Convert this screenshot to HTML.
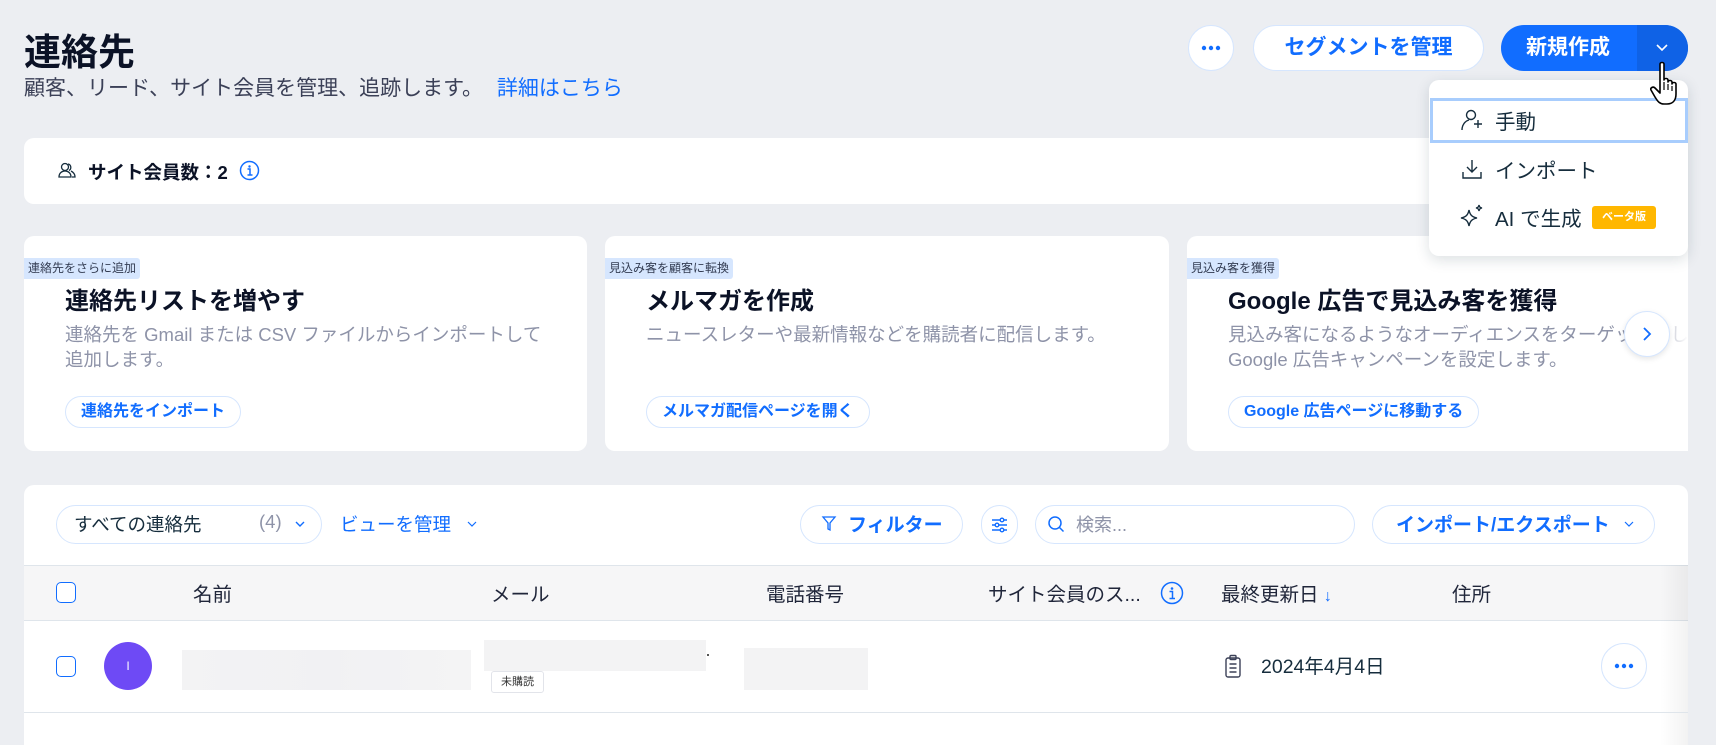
<!DOCTYPE html>
<html><head><meta charset="utf-8"><style>
*{box-sizing:border-box;margin:0;padding:0}
body{width:1716px;height:732px;overflow:hidden;background:#eceef2;font-family:"Liberation Sans","Noto Sans CJK JP",sans-serif;color:#162d3d;position:relative}
.abs{position:absolute}
.blue{color:#116dff}
.pill{position:absolute;border:1px solid #d6e6fe;border-radius:22px;background:#fff}
.card{position:absolute;top:236px;height:215px;background:#fff;border-radius:10px}
.tag{position:absolute;left:0;top:22px;height:21px;background:#d6e6fe;font-size:12px;line-height:21px;padding:0 4px;color:#333c52;border-radius:0 3px 3px 0}
.ct{position:absolute;left:41px;top:45px;font-size:24px;font-weight:bold;color:#0b1226}
.cd{position:absolute;left:41px;top:86px;font-size:18.5px;line-height:25px;color:#8e93a8;width:520px}
.cb{position:absolute;left:41px;top:160px;height:32px;border:1px solid #d6e6fe;border-radius:16px;padding:0 15px;font-size:16px;font-weight:bold;line-height:30px;color:#116dff}
.th{position:absolute;top:578px;font-size:19.5px;color:#20263a}
.cbx{position:absolute;width:20px;height:21px;border:1.5px solid #116dff;border-radius:5px;background:#fff}
.dots{position:absolute}
</style></head><body>
<div class="abs" style="left:24px;top:22px;font-size:37px;font-weight:bold;color:#0b1226">連絡先</div>
<div class="abs" style="left:24px;top:72px;font-size:21px;color:#3b4057">顧客、リード、サイト会員を管理、追跡します。 <span class="blue" style="margin-left:8px">詳細はこちら</span></div>

<!-- header buttons -->
<div class="pill" style="left:1188px;top:25px;width:46px;height:46px;border-radius:50%"></div>
<svg class="dots" style="left:1201px;top:45px" width="20" height="6" fill="#116dff"><circle cx="3" cy="3" r="2.2"/><circle cx="10" cy="3" r="2.2"/><circle cx="17" cy="3" r="2.2"/></svg>
<div class="pill" style="left:1253px;top:25px;width:231px;height:46px;border-radius:23px;text-align:center;line-height:44px;font-size:21px;font-weight:bold;color:#116dff">セグメントを管理</div>
<div class="abs" style="left:1501px;top:25px;width:187px;height:46px;border-radius:23px;background:#116dff;overflow:hidden">
<div class="abs" style="left:0;top:0;width:134px;height:46px;text-align:center;line-height:46px;color:#fff;font-size:21px;font-weight:bold">新規作成</div>
<div class="abs" style="left:136px;top:0;width:51px;height:46px;background:#0f62e6"></div>
<svg class="abs" style="left:154px;top:18px" width="14" height="10"><path d="M2 2l5 5 5-5" stroke="#fff" stroke-width="1.6" fill="none"/></svg>
</div>

<!-- members card -->
<div class="abs" style="left:24px;top:138px;width:1664px;height:66px;background:#fff;border-radius:10px"></div>
<svg class="abs" style="left:58px;top:161px" width="18" height="18" fill="none" stroke="#162d3d" stroke-width="1.3"><circle cx="7" cy="6" r="3.5"/><path d="M1 16c0-4 3-6 6-6s6 2 6 6z"/><path d="M10 3a3.5 3.5 0 0 1 1 6.5M13 10c2 1 4 3 4 6h-3"/></svg>
<div class="abs" style="left:88px;top:159px;font-size:18.5px;font-weight:bold;color:#0b1226">サイト会員数：2</div>
<svg class="abs" style="left:239px;top:160px" width="21" height="21"><circle cx="10.5" cy="10.5" r="9" fill="none" stroke="#116dff" stroke-width="1.5"/><circle cx="10.5" cy="6.5" r="1.2" fill="#116dff"/><path d="M8.5 9h2.5v6M8.5 15h5" stroke="#116dff" stroke-width="1.5" fill="none"/></svg>

<!-- promo cards -->
<div class="card" style="left:24px;width:563px">
<div class="tag">連絡先をさらに追加</div>
<div class="ct">連絡先リストを増やす</div>
<div class="cd">連絡先を Gmail または CSV ファイルからインポートして<br>追加します。</div>
<div class="cb">連絡先をインポート</div>
</div>
<div class="card" style="left:605px;width:564px">
<div class="tag">見込み客を顧客に転換</div>
<div class="ct">メルマガを作成</div>
<div class="cd">ニュースレターや最新情報などを購読者に配信します。</div>
<div class="cb">メルマガ配信ページを開く</div>
</div>
<div class="card" style="left:1187px;width:501px;border-radius:10px 0 0 10px;overflow:hidden">
<div class="tag">見込み客を獲得</div>
<div class="ct">Google 広告で見込み客を獲得</div>
<div class="cd" style="white-space:nowrap">見込み客になるようなオーディエンスをターゲットにし<br>Google 広告キャンペーンを設定します。</div>
<div class="cb">Google 広告ページに移動する</div>
<div class="abs" style="right:0;top:0;width:40px;height:215px;background:linear-gradient(90deg,rgba(255,255,255,0),#fff)"></div>
</div>
<div class="pill" style="left:1624px;top:311px;width:46px;height:46px;border-radius:50%;box-shadow:0 2px 6px rgba(0,0,0,.1)"></div>
<svg class="abs" style="left:1640px;top:326px" width="14" height="16"><path d="M4 2l6 6-6 6" stroke="#116dff" stroke-width="1.8" fill="none"/></svg>

<!-- table panel -->
<div class="abs" style="left:24px;top:485px;width:1664px;height:260px;background:#fff;border-radius:10px 10px 0 0"></div>
<div class="pill" style="left:56px;top:505px;width:266px;height:39px"></div>
<div class="abs" style="left:74px;top:511px;font-size:18.5px;color:#162d3d">すべての連絡先</div>
<div class="abs" style="left:259px;top:511px;font-size:18.5px;color:#8e93a8">(4)</div>
<svg class="abs" style="left:294px;top:520px" width="12" height="9"><path d="M2 2l4 4 4-4" stroke="#116dff" stroke-width="1.4" fill="none"/></svg>
<div class="abs blue" style="left:340px;top:511px;font-size:18.5px">ビューを管理</div>
<svg class="abs" style="left:466px;top:520px" width="12" height="9"><path d="M2 2l4 4 4-4" stroke="#116dff" stroke-width="1.2" fill="none"/></svg>
<div class="pill" style="left:800px;top:505px;width:163px;height:39px"></div>
<svg class="abs" style="left:821px;top:515px" width="16" height="18"><path d="M2 2h12l-5 6v7l-2-1V8z" stroke="#116dff" stroke-width="1.3" fill="none"/></svg>
<div class="abs blue" style="left:848px;top:510px;font-size:19px;font-weight:bold">フィルター</div>
<div class="pill" style="left:981px;top:505px;width:37px;height:39px"></div>
<svg class="abs" style="left:990px;top:515px" width="19" height="19" stroke="#116dff" stroke-width="1.4" fill="none"><path d="M2 5h15M2 10h15M2 15h15"/><circle cx="12" cy="5" r="1.8" fill="#fff"/><circle cx="7" cy="10" r="1.8" fill="#fff"/><circle cx="12" cy="15" r="1.8" fill="#fff"/></svg>
<div class="pill" style="left:1035px;top:505px;width:320px;height:39px"></div>
<svg class="abs" style="left:1047px;top:515px" width="18" height="19"><circle cx="8" cy="8" r="6" stroke="#116dff" stroke-width="1.5" fill="none"/><path d="M12.5 12.5l4 4" stroke="#116dff" stroke-width="1.5"/></svg>
<div class="abs" style="left:1076px;top:511px;font-size:18px;color:#8e93a8">検索...</div>
<div class="pill" style="left:1372px;top:505px;width:283px;height:39px"></div>
<div class="abs blue" style="left:1396px;top:510px;font-size:19px;font-weight:bold">インポート/エクスポート</div>
<svg class="abs" style="left:1623px;top:520px" width="12" height="9"><path d="M2 2l4 4 4-4" stroke="#116dff" stroke-width="1.2" fill="none"/></svg>

<div class="abs" style="left:24px;top:565px;width:1664px;height:56px;background:#f6f6f7;border-top:1px solid #dfe5eb;border-bottom:1px solid #dfe5eb"></div>
<div class="cbx" style="left:56px;top:582px"></div>
<div class="th" style="left:193px">名前</div>
<div class="th" style="left:491px">メール</div>
<div class="th" style="left:766px">電話番号</div>
<div class="th" style="left:988px">サイト会員のス...</div>
<svg class="abs" style="left:1160px;top:581px" width="24" height="24"><circle cx="12" cy="12" r="10.5" fill="none" stroke="#116dff" stroke-width="1.5"/><circle cx="12" cy="7.5" r="1.3" fill="#116dff"/><path d="M9.5 10.5h3v7M9.5 17.5h5.5" stroke="#116dff" stroke-width="1.5" fill="none"/></svg>
<div class="th" style="left:1221px">最終更新日 <span class="blue" style="font-size:16px">↓</span></div>
<div class="th" style="left:1452px">住所</div>
<div class="abs" style="left:1660px;top:565px;width:28px;height:180px;background:linear-gradient(90deg,rgba(0,0,0,0),rgba(0,0,0,.05))"></div>

<div class="cbx" style="left:56px;top:656px"></div>
<div class="abs" style="left:104px;top:642px;width:48px;height:48px;border-radius:50%;background:#6e4af5;color:#fff;text-align:center;line-height:48px;font-size:12px">I</div>
<div class="abs" style="left:182px;top:650px;width:289px;height:40px;background:linear-gradient(90deg,#f3f3f4,#f1f1f3,#f4f4f5)"></div>
<div class="abs" style="left:484px;top:640px;width:222px;height:31px;background:#f3f3f4"></div>
<div class="abs" style="left:707px;top:654px;width:2px;height:2px;background:#555"></div>
<div class="abs" style="left:491px;top:671px;width:53px;height:22px;border:1px solid #e2e4ea;border-radius:3px;font-size:11px;line-height:20px;text-align:center;color:#333">未購読</div>
<div class="abs" style="left:744px;top:648px;width:124px;height:42px;background:#f3f3f4"></div>
<svg class="abs" style="left:1224px;top:654px" width="18" height="24" fill="none" stroke="#3b4057" stroke-width="1.4"><rect x="2" y="4" width="14" height="19" rx="2"/><rect x="6" y="1.5" width="6" height="4" rx="1"/><path d="M5.5 10h7M5.5 14h7M5.5 18h7"/></svg>
<div class="abs" style="left:1261px;top:650px;font-size:19.5px;color:#162d3d">2024年4月4日</div>
<div class="pill" style="left:1601px;top:643px;width:46px;height:46px;border-radius:50%"></div>
<svg class="dots" style="left:1614px;top:663px" width="20" height="6" fill="#116dff"><circle cx="3" cy="3" r="2.2"/><circle cx="10" cy="3" r="2.2"/><circle cx="17" cy="3" r="2.2"/></svg>
<div class="abs" style="left:24px;top:712px;width:1664px;height:1px;background:#dfe5eb"></div>

<!-- dropdown -->
<div class="abs" style="left:1429px;top:80px;width:259px;height:176px;background:#fff;border-radius:10px;box-shadow:0 4px 14px rgba(22,45,61,.15)"></div>
<div class="abs" style="left:1430px;top:98px;width:258px;height:45px;border:3px solid #a8cdfd"></div>
<svg class="abs" style="left:1461px;top:108px" width="22" height="24" fill="none" stroke="#162d3d" stroke-width="1.4"><circle cx="10" cy="7" r="4.5"/><path d="M1 22c0-5 3-9 7-10M13 16h8M17 12v8"/></svg>
<div class="abs" style="left:1495px;top:105px;font-size:20.5px">手動</div>
<svg class="abs" style="left:1461px;top:158px" width="22" height="22" fill="none" stroke="#162d3d" stroke-width="1.4"><path d="M11 2v12M6 9l5 5 5-5M2 14v6h18v-6"/></svg>
<div class="abs" style="left:1495px;top:154px;font-size:20.5px">インポート</div>
<svg class="abs" style="left:1459px;top:204px" width="26" height="26" fill="none" stroke="#162d3d" stroke-width="1.4"><path d="M10 6c1 5 3 7 8 8-5 1-7 3-8 8-1-5-3-7-8-8 5-1 7-3 8-8z"/><path d="M20 1c.4 2 1 2.6 3 3-2 .4-2.6 1-3 3-.4-2-1-2.6-3-3 2-.4 2.6-1 3-3z"/></svg>
<div class="abs" style="left:1495px;top:202px;font-size:20.5px">AI で生成</div>
<div class="abs" style="left:1592px;top:206px;width:64px;height:23px;background:#ffb700;border-radius:3px;color:#fff;font-size:11px;font-weight:bold;text-align:center;line-height:23px">ベータ版</div>

<!-- cursor -->
<svg class="abs" style="left:1650px;top:60px" width="34" height="48" viewBox="0 0 34 48"><path d="M10 4c0-2 4-2 4 0v16c0-2 4-2 4 0v2c0-2 4-2 4 0v2c0-2 4-2 4 0v10c0 6-3 10-9 10h-3c-4 0-6-2-9-7l-4-7c-1-2 2-4 4-2l5 5z" fill="#fff" stroke="#000" stroke-width="1.6" stroke-linejoin="round"/><path d="M14 22v8M18 24v6M22 26v5" stroke="#000" stroke-width="1.2"/></svg>
</body></html>
